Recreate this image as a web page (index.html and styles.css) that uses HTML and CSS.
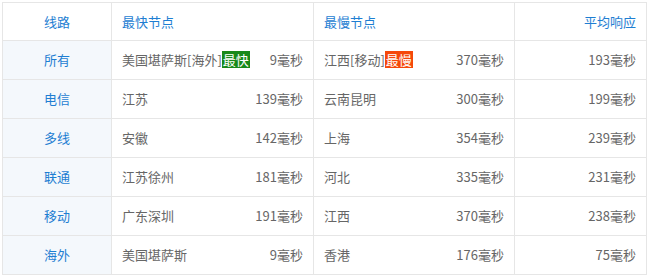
FILE: index.html
```html
<!DOCTYPE html>
<html lang="zh-CN">
<head>
<meta charset="utf-8">
<link rel="stylesheet" href="styles.css">
</head>
<body>
<table class="speed">
  <colgroup>
    <col class="c1"><col class="c2"><col class="c3"><col class="c4">
  </colgroup>
  <thead>
    <tr>
      <th class="line">线路</th>
      <th class="node">最快节点</th>
      <th class="node">最慢节点</th>
      <th class="avg">平均响应</th>
    </tr>
  </thead>
  <tbody>
    <tr>
      <td class="line">所有</td>
      <td class="node"><span class="name">美国堪萨斯[海外]<span class="badge fast">最快</span></span><span class="ms">9毫秒</span></td>
      <td class="node"><span class="name">江西[移动]<span class="badge slow">最慢</span></span><span class="ms">370毫秒</span></td>
      <td class="avg">193毫秒</td>
    </tr>
    <tr>
      <td class="line">电信</td>
      <td class="node"><span class="name">江苏</span><span class="ms">139毫秒</span></td>
      <td class="node"><span class="name">云南昆明</span><span class="ms">300毫秒</span></td>
      <td class="avg">199毫秒</td>
    </tr>
    <tr>
      <td class="line">多线</td>
      <td class="node"><span class="name">安徽</span><span class="ms">142毫秒</span></td>
      <td class="node"><span class="name">上海</span><span class="ms">354毫秒</span></td>
      <td class="avg">239毫秒</td>
    </tr>
    <tr>
      <td class="line">联通</td>
      <td class="node"><span class="name">江苏徐州</span><span class="ms">181毫秒</span></td>
      <td class="node"><span class="name">河北</span><span class="ms">335毫秒</span></td>
      <td class="avg">231毫秒</td>
    </tr>
    <tr>
      <td class="line">移动</td>
      <td class="node"><span class="name">广东深圳</span><span class="ms">191毫秒</span></td>
      <td class="node"><span class="name">江西</span><span class="ms">370毫秒</span></td>
      <td class="avg">238毫秒</td>
    </tr>
    <tr>
      <td class="line">海外</td>
      <td class="node"><span class="name">美国堪萨斯</span><span class="ms">9毫秒</span></td>
      <td class="node"><span class="name">香港</span><span class="ms">176毫秒</span></td>
      <td class="avg">75毫秒</td>
    </tr>
  </tbody>
</table>
</body>
</html>
```

FILE: styles.css
```css
html, body {
  margin: 0;
  padding: 0;
  background: #fff;
}
body {
  padding: 2px;
  font-family: "Noto Sans CJK SC", "Noto Sans", sans-serif;
  font-size: 13px;
  color: #666;
}
.speed {
  border-collapse: collapse;
  table-layout: fixed;
  width: 644px;
}
.c1 { width: 109px; }
.c2 { width: 202px; }
.c3 { width: 201px; }
.c4 { width: 132px; }
.speed th, .speed td {
  border: 1px solid #e6e6e6;
  height: 39px;
  padding: 0 10px;
  font-weight: normal;
  line-height: 20px;
  box-sizing: border-box;
  white-space: nowrap;
}
.speed thead th {
  height: 38px;
  color: #1e7ed2;
  text-align: left;
}
.speed th.line, .speed td.line {
  text-align: center;
  color: #1e7ed2;
}
.speed td.line {
  background: #f4f8fc;
}
.speed th.avg, .speed td.avg {
  text-align: right;
}
.speed td.node .name {
  float: left;
}
.speed td.node .ms {
  float: right;
}
.badge {
  display: inline-block;
  color: #fff;
  padding: 0 1px;
  line-height: 17px;
}
.badge.fast { background: #19891a; }
.badge.slow { background: #f5480a; }
```
